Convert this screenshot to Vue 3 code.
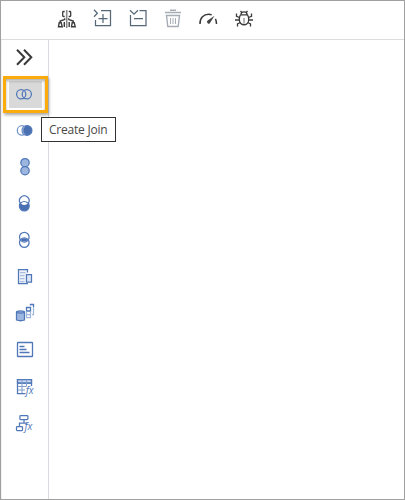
<script setup>
const label = 'Create Join'
</script>

<template>
  <div class="window">
    <header class="toolbar">
      <svg class="tool dark" viewBox="0 0 20 20">
        <path d="M9.700 1v18" stroke-width="1.600" stroke="#888" />
        <path d="M7.700 2.500H6.500q-.8 0-.8.800V6.700q0 .8.800.8h1.200M11.700 2.500h1.200q.8 0 .8.800V6.700q0 .8-.8.800h-1.200" stroke-width="1.300" />
        <path d="M3.200 13.500V12l4-1.300 1-1.200M16.200 13.500V12l-4-1.300-1-1.200" stroke-width="1.500" />
        <path d="M2.200 13.700h2l1 4h-3.700zM15.200 13.700h2l1 4h-3.700zM7.300 13v5M12.200 13v5" stroke-width="1.400" />
      </svg>
      <svg class="tool slate" viewBox="0 0 20 20">
        <path d="M2 .7l3.400 3.500L2 7.700M9 1.500h9.500v15h-15v-5.500M11 5v9M6.500 9.500h9" />
      </svg>
      <svg class="tool slate" viewBox="0 0 20 20">
        <path d="M2 1.200l4 3.900 4-3.900M11.500 1.500h6.500v15H2.500V6M6 9.500h9" />
      </svg>
      <svg class="tool gray" viewBox="0 0 20 20">
        <path d="M2 3.500h16" stroke-width="1.500" />
        <path d="M7 1.300h6M3.500 6.500h13l-1.300 11h-10.400z" stroke-width="1.400" />
        <path d="M7.500 9v6M10 9v6M12.500 9v6" stroke-width="1" />
      </svg>
      <svg class="tool dark" viewBox="0 0 20 20">
        <path d="M1 15C.7 8.800 5 5.300 9.500 5.300c1.200 0 2.300.2 3.200.6M16.400 9.800c.8 1.400 1.100 3 1.100 5.200" stroke-width="1.500" />
        <path d="M15.500 6.700L11.300 13.500a1.700 1.700 0 1 1-2.600-2z" fill="#444" stroke="none" />
      </svg>
      <svg class="tool dark" viewBox="0 0 20 20">
        <path d="M7 5.500a3 2.600 0 0 1 6 0M6.500 5.800h7q1.200 1.600 1.200 4.700c0 7-9.400 7-9.400 0q0-3.100 1.200-4.700M6.500 2l1.500 1.700M13.500 2L12 3.700" stroke-width="1.300" />
        <path d="M5.300 8.500L2.500 7.300V4.500M14.700 8.500l2.800-1.200V4.500M1 11h4.300M14.700 11H19M6.300 13.500l-2.800 1.300V17.500M13.700 13.500l2.800 1.300V17.500" stroke-width="1.300" />
        <path d="M10 9v5.500" stroke="#888" />
      </svg>
    </header>

    <div class="body">
      <nav class="rail">
        <div class="item">
          <svg viewBox="0 0 24 24"><path d="M5 4.800l7.300 7.500L5 19.800M12 4.800l7.300 7.500-7.300 7.500" stroke="#3a3a3a" stroke-width="2" /></svg>
        </div>
        <div class="item active">
          <svg viewBox="0 0 24 24"><circle cx="9.200" cy="12.300" r="4.600" /><circle cx="14.800" cy="12.300" r="4.600" /></svg>
          <div class="tooltip">{{ label }}</div>
        </div>
        <div class="item">
          <svg viewBox="0 0 24 24"><circle cx="10" cy="12.400" r="4.700" stroke="#7393c6" /><circle cx="15" cy="12.400" r="4.900" class="solid" /><path d="M12.700 8.500a5 5 0 0 0 0 7.800" stroke="#b9cae6" stroke-width=".8" /></svg>
        </div>
        <div class="item">
          <svg viewBox="0 0 24 24"><circle cx="13" cy="7.700" r="4.200" class="soft" /><circle cx="13" cy="15.700" r="4.200" class="soft" /></svg>
        </div>
        <div class="item">
          <svg viewBox="0 0 24 24"><circle cx="12.300" cy="15" r="4.900" class="solid" /><circle cx="12.300" cy="9.700" r="4.300" fill="#fff" stroke="none" /><path d="M8.200 12.200a4.800 4.800 0 1 1 8.200 0M8.800 12c2-1.900 5-1.900 7 0" /></svg>
        </div>
        <div class="item">
          <svg viewBox="0 0 24 24"><path d="M8.800 11.900c2-1.900 5-1.900 7 0-2 1.900-5 1.900-7 0z" class="solid" stroke="none" /><circle cx="12.300" cy="9.200" r="4.800" /><circle cx="12.300" cy="14.600" r="4.800" /></svg>
        </div>
        <div class="item">
          <svg viewBox="0 0 24 24"><path d="M6.500 4.500h9v14h-9z" fill="#edf2fa" stroke="none" /><path d="M15.500 7.500v-3h-9v14h9.500" /><path d="M8 7.500h5.500M8 10.500h4.500M8 13.500h4.500M8 16.500h4.500" stroke="#a8bddf" /><path d="M14.500 9.500h5v7.500h-5z" fill="#dce7f7" /></svg>
        </div>
        <div class="item">
          <svg viewBox="0 0 24 24"><path d="M4.500 11v8q4 1.500 8 0v-8" class="soft" /><ellipse cx="8.500" cy="11" rx="4" ry="1.100" class="soft" /><path d="M14.500 6.500h4v3.500h-4zM18.500 4.500V3.500h3V6" stroke-width="1.300" /><path d="M14.500 10.500v6h4v-6M21.500 6v7.500H20M14.500 13.500h4" stroke="#a0b7dc" /></svg>
        </div>
        <div class="item">
          <svg viewBox="0 0 24 24"><rect x="5.500" y="4.500" width="15" height="14" rx=".6" stroke-width="1.300" /><path d="M7.500 8.500h5M7.500 11.500h7M7.500 14.500h10" stroke-width="1.300" /></svg>
        </div>
        <div class="item">
          <svg viewBox="0 0 24 24"><path d="M5.500 5.500h14v3.500h-14z" fill="#cbd9ef" /><path d="M5.500 5v14.500h8M19.500 5v7M5.500 9h14" /><path d="M10 5.500v13.500M14.500 5.500v7M6 12.500h8M6 16h7" stroke="#7f9dcd" stroke-width="1" /><text x="13.800" y="19.800">fx</text></svg>
        </div>
        <div class="item">
          <svg viewBox="0 0 24 24"><rect x="7.900" y="4.500" width="8" height="4" rx=".8" /><path d="M12 8.500v3.500H7.500V15.500M12 12h3" /><rect x="4.500" y="15.500" width="6" height="4" rx=".8" /><text x="12.600" y="18.500">fx</text></svg>
        </div>
      </nav>
      <main class="canvas"></main>
    </div>
  </div>
</template>

<style>
body { margin: 0; }
</style>

<style scoped>
.window {
  box-sizing: border-box;
  width: 405px;
  height: 500px;
  display: flex;
  flex-direction: column;
  border: 1px solid #a0a0a0;
  background: #fff;
  font-family: "Open Sans", "Noto Sans", sans-serif;
}
.toolbar {
  box-sizing: border-box;
  height: 39px;
  display: flex;
  gap: 15.400px;
  padding: 8px 0 0 56px;
  border-bottom: 1px solid #dcdcdf;
}
.tool { width: 20px; height: 20px; fill: none; stroke-width: 1.250; }
.dark { stroke: #3c3c3c; }
.slate { stroke: #566878; }
.gray { stroke: #a6adb5; }
.body { display: flex; flex: 1; min-height: 0; }
.rail {
  box-sizing: border-box;
  width: 48px;
  padding-top: 5px;
  border-right: 1px solid #d8dae0;
  border-left: 1px solid #f1f1f1;
}
.item { height: 36.600px; padding-left: 10px; position: relative; }
.item svg {
  display: block;
  position: relative;
  width: 24px;
  height: 24px;
  fill: none;
  stroke: #5078b8;
  stroke-width: 1.250;
}
.item .solid { fill: #4a70b2; }
.item .soft { fill: #9db6df; }
.item text {
  font: italic 10px "Open Sans", sans-serif;
  letter-spacing: -0.200px;
  fill: #5078b8;
  stroke: none;
}
.active::before {
  content: "";
  position: absolute;
  left: 1px;
  top: -6px;
  width: 39px;
  height: 31px;
  border: 3px solid #fbab0c;
  background: linear-gradient(#d9d9d9, #d9d9d9) 3px 2px / 33px 27px no-repeat, #fff;
  box-shadow: 1px 2px 3px rgba(0, 0, 0, 0.35), inset 0 2px 3px rgba(0, 0, 0, 0.3);
}
.tooltip {
  box-sizing: border-box;
  position: absolute;
  z-index: 2;
  left: 39px;
  top: 35.400px;
  width: 75px;
  height: 25px;
  padding-left: 7px;
  border: 1px solid #333;
  background: #fff;
  color: #484848;
  font-size: 12px;
  line-height: 24px;
  letter-spacing: -0.220px;
  white-space: nowrap;
}
.canvas { flex: 1; }
</style>
